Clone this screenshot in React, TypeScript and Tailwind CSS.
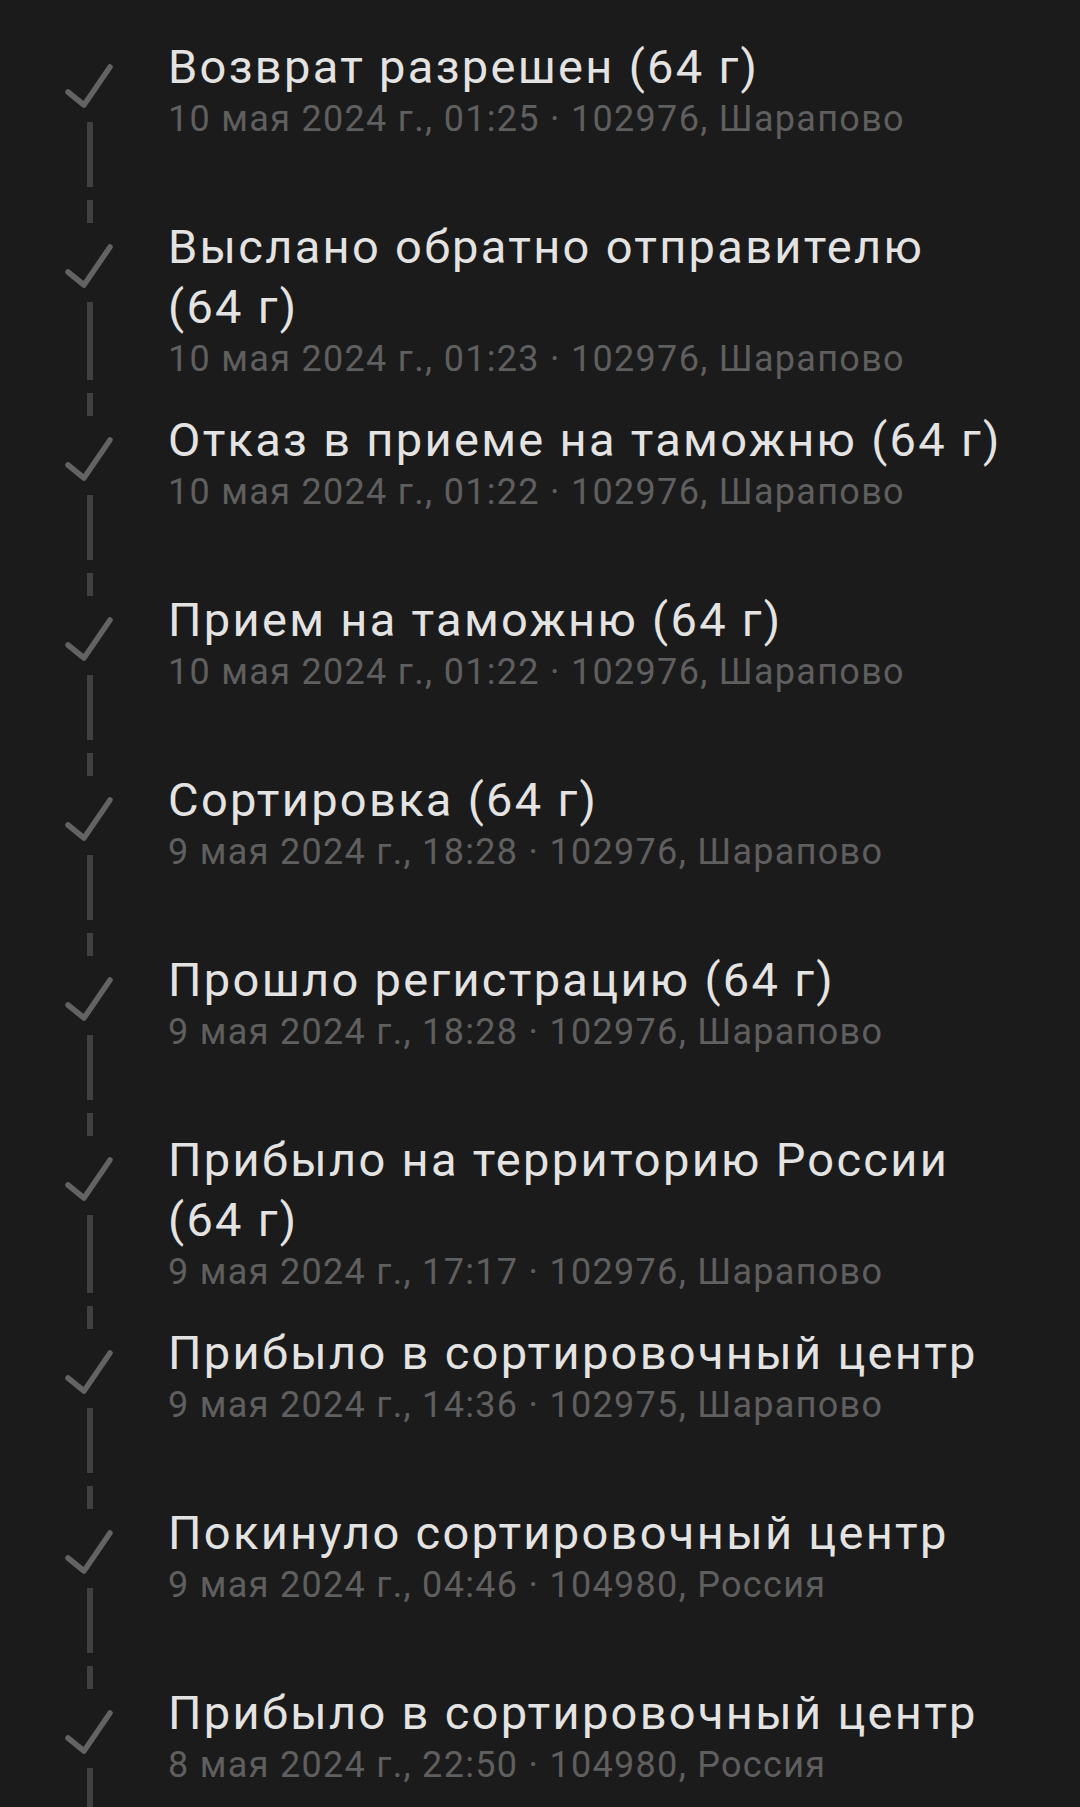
type TrackingEvent = {
    title: string;
    date: string;
    place: string;
};

// weights use a non-breaking space so "(64 г)" never splits
const events: TrackingEvent[] = [
    { title: 'Возврат разрешен (64\u00a0г)', date: '10 мая 2024 г., 01:25', place: '102976, Шарапово' },
    { title: 'Выслано обратно отправителю (64\u00a0г)', date: '10 мая 2024 г., 01:23', place: '102976, Шарапово' },
    { title: 'Отказ в приеме на таможню (64\u00a0г)', date: '10 мая 2024 г., 01:22', place: '102976, Шарапово' },
    { title: 'Прием на таможню (64\u00a0г)', date: '10 мая 2024 г., 01:22', place: '102976, Шарапово' },
    { title: 'Сортировка (64\u00a0г)', date: '9 мая 2024 г., 18:28', place: '102976, Шарапово' },
    { title: 'Прошло регистрацию (64\u00a0г)', date: '9 мая 2024 г., 18:28', place: '102976, Шарапово' },
    { title: 'Прибыло на территорию России (64\u00a0г)', date: '9 мая 2024 г., 17:17', place: '102976, Шарапово' },
    { title: 'Прибыло в сортировочный центр', date: '9 мая 2024 г., 14:36', place: '102975, Шарапово' },
    { title: 'Покинуло сортировочный центр', date: '9 мая 2024 г., 04:46', place: '104980, Россия' },
    { title: 'Прибыло в сортировочный центр', date: '8 мая 2024 г., 22:50', place: '104980, Россия' },
];

function CheckIcon() {
    return (
        <svg className="-mt-[2px] h-[46px] w-[50px] shrink-0" viewBox="0 0 50 46" fill="none">
            <path
                d="M5 29 L21 42 L47 4"
                stroke="#636363"
                strokeWidth={5.5}
                strokeLinecap="round"
                strokeLinejoin="round"
            />
        </svg>
    );
}

function EventRow({ event }: { event: TrackingEvent }) {
    return (
        <div className="flex min-h-[180px]">
            {/* check + connector */}
            <div className="flex w-[168px] shrink-0 flex-col pl-[63px]">
                <CheckIcon />
                <div className="mt-[13px] ml-[24px] w-[6px] flex-1 bg-[#404040]" />
                <div className="mt-[13px] ml-[24px] h-[23px] w-[6px] bg-[#404040]" />
                <div className="h-[22px]" />
            </div>

            <div className="-mt-[28px] min-w-0 flex-1 pr-[50px] pb-[56px]">
                <p className="text-[47px] leading-[60px] tracking-[2.3px] text-[#e3e3e3]">{event.title}</p>
                <p className="text-[36px] leading-[45px] tracking-[1.3px] text-[#5f5f5f]">
                    {event.date} · {event.place}
                </p>
            </div>
        </div>
    );
}

export default function App() {
    return (
        <div
            className="h-[1807px] w-[1080px] overflow-hidden bg-[#1b1b1b] pt-[65px]"
            style={{ fontFamily: 'Roboto, "Noto Sans", sans-serif' }}
        >
            {events.map((event, i) => (
                <EventRow key={i} event={event} />
            ))}
        </div>
    );
}
